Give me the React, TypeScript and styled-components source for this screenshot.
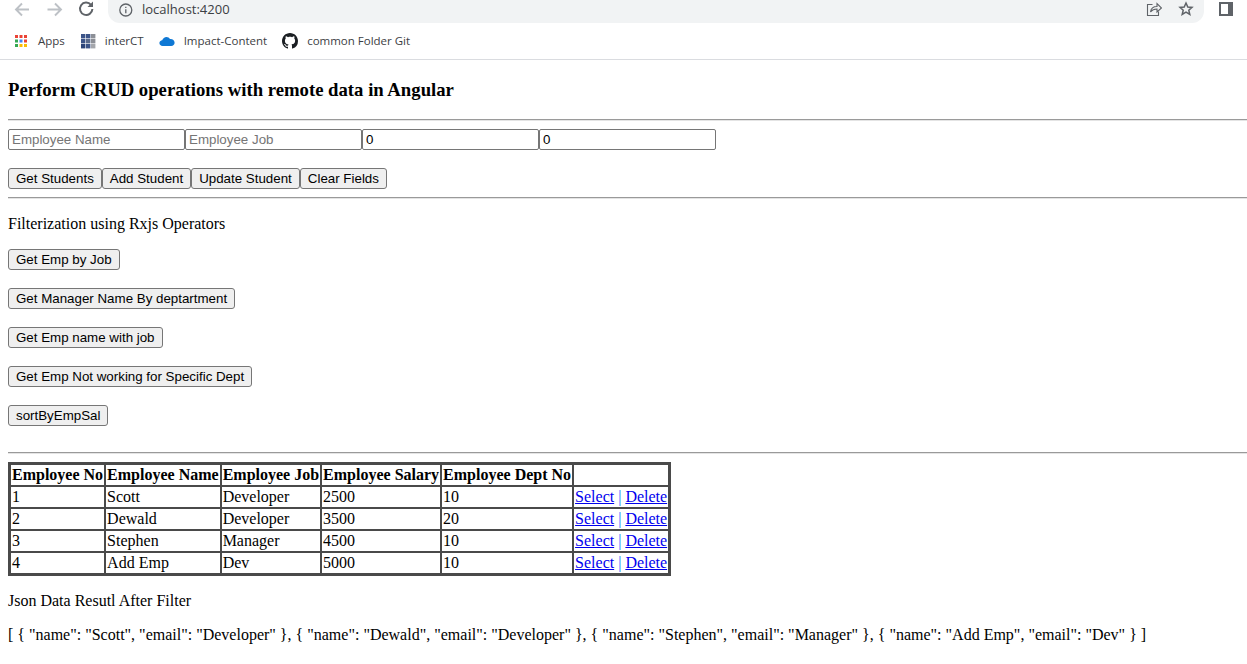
import React from 'react';
import styled, { createGlobalStyle } from 'styled-components';

const employees = [
  { no: 1, name: 'Scott', job: 'Developer', salary: 2500, dept: 10 },
  { no: 2, name: 'Dewald', job: 'Developer', salary: 3500, dept: 20 },
  { no: 3, name: 'Stephen', job: 'Manager', salary: 4500, dept: 10 },
  { no: 4, name: 'Add Emp', job: 'Dev', salary: 5000, dept: 10 },
];

const headers = ['Employee No', 'Employee Name', 'Employee Job', 'Employee Salary', 'Employee Dept No', ''];

const bookmarks = ['Apps', 'interCT', 'Impact-Content', 'common Folder Git'];

const GlobalStyle = createGlobalStyle`
  html, body {
    margin: 0;
    height: 664px;
    overflow: hidden;
    background: #fff;
  }
  body {
    font-family: "Liberation Serif", "Times New Roman", serif;
    font-size: 16px;
    color: #000;
  }
`;

const Chrome = styled.header`
  height: 60px;
  box-sizing: border-box;
  border-bottom: 1px solid #dadce0;
  font-family: "Open Sans", "Liberation Sans", sans-serif;
`;

const Toolbar = styled.div`
  height: 23px;
  display: flex;
  align-items: flex-start;
  padding-left: 14px;
`;

const NavIcon = styled.svg`
  width: 18px;
  height: 18px;
  margin-right: 14px;
  flex: none;
`;

const Omnibox = styled.div`
  flex: none;
  width: 1096px;
  height: 23px;
  margin-left: -2px;
  box-sizing: border-box;
  padding: 0 10px 5px 9px;
  background: #f1f3f4;
  border-radius: 0 0 12px 12px;
  display: flex;
  align-items: center;
  gap: 9px;
  font-size: 13px;
  color: #3c4043;
`;

const Spacer = styled.span`
  flex: 1;
`;

const SmallIcon = styled.svg`
  width: 16px;
  height: 16px;
  flex: none;
`;

const StarIcon = styled(SmallIcon)`
  margin-left: 7px;
`;

const SidePanelIcon = styled.div`
  box-sizing: border-box;
  width: 14px;
  height: 14px;
  margin: 2px 0 0 15px;
  border: 2px solid #5f6368;
  border-right-width: 5px;
  background: #fff;
`;

const BookmarkBar = styled.nav`
  height: 36px;
  display: flex;
  align-items: center;
  padding: 0 0 1px 13px;
  box-sizing: border-box;
`;

const Bookmark = styled.span`
  display: flex;
  align-items: center;
  gap: 9px;
  margin-right: 15px;
  font-size: 11.5px;
  color: #3c4043;
`;

const Page = styled.main`
  margin: 0 0 0 8px;
`;

const Title = styled.h3`
  font-size: 18.72px;
  font-weight: bold;
  margin: 19px 0 19px;
  line-height: 21px;
`;

const Rule = styled.hr`
  margin: 0;
  border: none;
  border-top: 1px solid #9a9a9a;
  border-bottom: 1px solid #e4e4e4;
  height: 0;
`;

const FieldRow = styled.div`
  display: flex;
  margin-top: 8px;
`;

const Field = styled.input`
  box-sizing: border-box;
  width: 177px;
  height: 21px;
  margin: 0;
  padding: 1px 3px;
  border: 1px solid #767676;
  border-radius: 2px;
  font-family: "Liberation Sans", Arial, sans-serif;
  font-size: 13.33px;
  color: #000;
  background: #fff;
  &::placeholder {
    color: #757575;
  }
`;

const ActionRow = styled.div`
  display: flex;
  margin: 18px 0 8px;
`;

const Action = styled.button`
  box-sizing: border-box;
  height: 21px;
  margin: 0;
  padding: 0 7px;
  border: 1px solid #767676;
  border-radius: 3px;
  background: #efefef;
  font-family: "Liberation Sans", Arial, sans-serif;
  font-size: 13.33px;
  color: #000;
  white-space: nowrap;
`;

const FilterTitle = styled.p`
  margin: 16px 0 16px;
  line-height: 18px;
`;

const FilterRow = styled.div`
  margin-bottom: 18px;
  height: 21px;
`;

const TableRule = styled(Rule)`
  margin-top: 26px;
`;

const Grid = styled.table`
  margin-top: 8px;
  border-collapse: separate;
  border-spacing: 0;
  border: 2px solid #4a4a4a;
`;

const HeadCell = styled.th`
  padding: 1px;
  height: 18px;
  border: 1px solid #4a4a4a;
  font-weight: bold;
  text-align: left;
  white-space: nowrap;
  line-height: 18px;
`;

const Cell = styled.td`
  padding: 1px;
  height: 18px;
  border: 1px solid #4a4a4a;
  white-space: nowrap;
  line-height: 18px;
`;

const RowLink = styled.a`
  color: #0000ee;
  text-decoration: underline;
`;

const LinkDivider = styled.span`
  color: #0d6efd;
`;

const ResultTitle = styled.p`
  margin: 16px 0 16px;
  line-height: 18px;
`;

const ResultBody = styled.p`
  margin: 0;
  line-height: 18px;
  white-space: nowrap;
`;

const AppsGrid = () => (
  <SmallIcon viewBox="0 0 16 16">
    {[
      ['#ea4335', '#ea4335', '#ea4335'],
      ['#34a853', '#4285f4', '#ea4335'],
      ['#34a853', '#fbbc04', '#fbbc04'],
    ].map((row, r) =>
      row.map((fill, c) => <rect key={`${r}-${c}`} x={2 + c * 4.5} y={2 + r * 4.5} width="3" height="3" fill={fill} />),
    )}
  </SmallIcon>
);

const InterctLogo = () => (
  <SmallIcon viewBox="0 0 16 16">
    {[
      ['#3c5488', '#3c5488', '#8c8f96'],
      ['#3c5488', '#5b6b8c', '#8c8f96'],
      ['#2c4478', '#3c5488', '#a4a6ab'],
    ].map((row, r) =>
      row.map((fill, c) => <rect key={`${r}-${c}`} x={1 + c * 5} y={1 + r * 5} width="4.4" height="4.4" fill={fill} />),
    )}
  </SmallIcon>
);

const CloudLogo = () => (
  <SmallIcon viewBox="0 0 16 16">
    <path
      d="M3.6 13C1.8 13 .4 11.8.4 10.1c0-1.6 1.2-2.8 2.8-2.9C3.9 5.3 5.6 4 7.5 4c1.5 0 2.8.8 3.5 2 2.5-.3 4.6 1.4 4.6 3.7 0 1.9-1.5 3.3-3.4 3.3z"
      fill="#0f78d4"
    />
  </SmallIcon>
);

const GithubLogo = () => (
  <SmallIcon viewBox="0 0 16 16">
    <path
      fill="#1b1f23"
      d="M8 0C3.58 0 0 3.58 0 8c0 3.54 2.29 6.53 5.47 7.59.4.07.55-.17.55-.38 0-.19-.01-.82-.01-1.49-2.01.37-2.53-.49-2.69-.94-.09-.23-.48-.94-.82-1.13-.28-.15-.68-.52-.01-.53.63-.01 1.08.58 1.23.82.72 1.21 1.87.87 2.33.66.07-.52.28-.87.51-1.07-1.78-.2-3.64-.89-3.64-3.95 0-.87.31-1.59.82-2.15-.08-.2-.36-1.02.08-2.12 0 0 .67-.21 2.2.82.64-.18 1.32-.27 2-.27s1.36.09 2 .27c1.53-1.04 2.2-.82 2.2-.82.44 1.1.16 1.92.08 2.12.51.56.82 1.27.82 2.15 0 3.07-1.87 3.75-3.65 3.95.29.25.54.73.54 1.48 0 1.07-.01 1.93-.01 2.2 0 .21.15.46.55.38A8.01 8.01 0 0 0 16 8c0-4.42-3.58-8-8-8z"
    />
  </SmallIcon>
);

const bookmarkIcons = [<AppsGrid />, <InterctLogo />, <CloudLogo />, <GithubLogo />];

const App: React.FC = () => {
  return (
    <>
      <GlobalStyle />
      <Chrome>
        <Toolbar>
          <NavIcon viewBox="0 0 18 18" fill="none" stroke="#bdc1c6" strokeWidth="1.9">
            <path d="M15 9.5H2.5M8 3.5 2 9.5l6 6" />
          </NavIcon>
          <NavIcon viewBox="0 0 18 18" fill="none" stroke="#bdc1c6" strokeWidth="1.9">
            <path d="M1.5 9.5H15M9 3.5l6 6-6 6" />
          </NavIcon>
          <NavIcon viewBox="0 0 18 18" fill="none" stroke="#5f6368" strokeWidth="2">
            <path d="M13 4.8A6.2 6.2 0 1 0 14.4 9" />
            <path d="M15 1.5V7H9.5z" fill="#5f6368" stroke="none" />
          </NavIcon>
          <Omnibox>
            <SmallIcon viewBox="0 0 16 16" fill="none" stroke="#5f6368" strokeWidth="1.3">
              <circle cx="8.8" cy="9" r="6" />
              <path d="M8.8 8.3v4M8.8 5.7v1.4" />
            </SmallIcon>
            localhost:4200
            <Spacer />
            <SmallIcon viewBox="0 0 16 16" fill="none" stroke="#5f6368" strokeWidth="1.1">
              <path d="M6.5 3.5h-5v11h11v-4" />
              <path d="M4.5 11c.5-3.5 3-5.500 6.500-5.500V2.500l4.500 4.500-4.500 4V8C8 8 6 9 4.500 11z" />
            </SmallIcon>
            <StarIcon viewBox="0 0 16 16" fill="none" stroke="#5f6368" strokeWidth="1.5">
              <path d="m8 2 1.8 4 4.200.4-3.200 2.800 1 4.200L8 11.200l-3.800 2.200 1-4.200L2 6.400 6.200 6z" />
            </StarIcon>
          </Omnibox>
          <SidePanelIcon />
        </Toolbar>
        <BookmarkBar>
          {bookmarks.map((label, i) => (
            <Bookmark key={label}>
              {bookmarkIcons[i]}
              {label}
            </Bookmark>
          ))}
        </BookmarkBar>
      </Chrome>
      <Page>
        <Title>Perform CRUD operations with remote data in Angular</Title>
        <Rule />
        <FieldRow>
          <Field placeholder="Employee Name" />
          <Field placeholder="Employee Job" />
          <Field defaultValue="0" />
          <Field defaultValue="0" />
        </FieldRow>
        <ActionRow>
          <Action>Get Students</Action>
          <Action>Add Student</Action>
          <Action>Update Student</Action>
          <Action>Clear Fields</Action>
        </ActionRow>
        <Rule />
        <FilterTitle>Filterization using Rxjs Operators</FilterTitle>
        <FilterRow>
          <Action>Get Emp by Job</Action>
        </FilterRow>
        <FilterRow>
          <Action>Get Manager Name By deptartment</Action>
        </FilterRow>
        <FilterRow>
          <Action>Get Emp name with job</Action>
        </FilterRow>
        <FilterRow>
          <Action>Get Emp Not working for Specific Dept</Action>
        </FilterRow>
        <FilterRow>
          <Action>sortByEmpSal</Action>
        </FilterRow>
        <TableRule />
        <Grid>
          <thead>
            <tr>
              {headers.map((h) => (
                <HeadCell key={h}>{h}</HeadCell>
              ))}
            </tr>
          </thead>
          <tbody>
            {employees.map((e) => (
              <tr key={e.no}>
                <Cell>{e.no}</Cell>
                <Cell>{e.name}</Cell>
                <Cell>{e.job}</Cell>
                <Cell>{e.salary}</Cell>
                <Cell>{e.dept}</Cell>
                <Cell>
                  <RowLink href="#">Select</RowLink> <LinkDivider>|</LinkDivider> <RowLink href="#">Delete</RowLink>
                </Cell>
              </tr>
            ))}
          </tbody>
        </Grid>
        <ResultTitle>Json Data Resutl After Filter</ResultTitle>
        <ResultBody>
          {'[ { "name": "Scott", "email": "Developer" }, { "name": "Dewald", "email": "Developer" }, { "name": "Stephen", "email": "Manager" }, { "name": "Add Emp", "email": "Dev" } ]'}
        </ResultBody>
      </Page>
    </>
  );
};

export default App;
